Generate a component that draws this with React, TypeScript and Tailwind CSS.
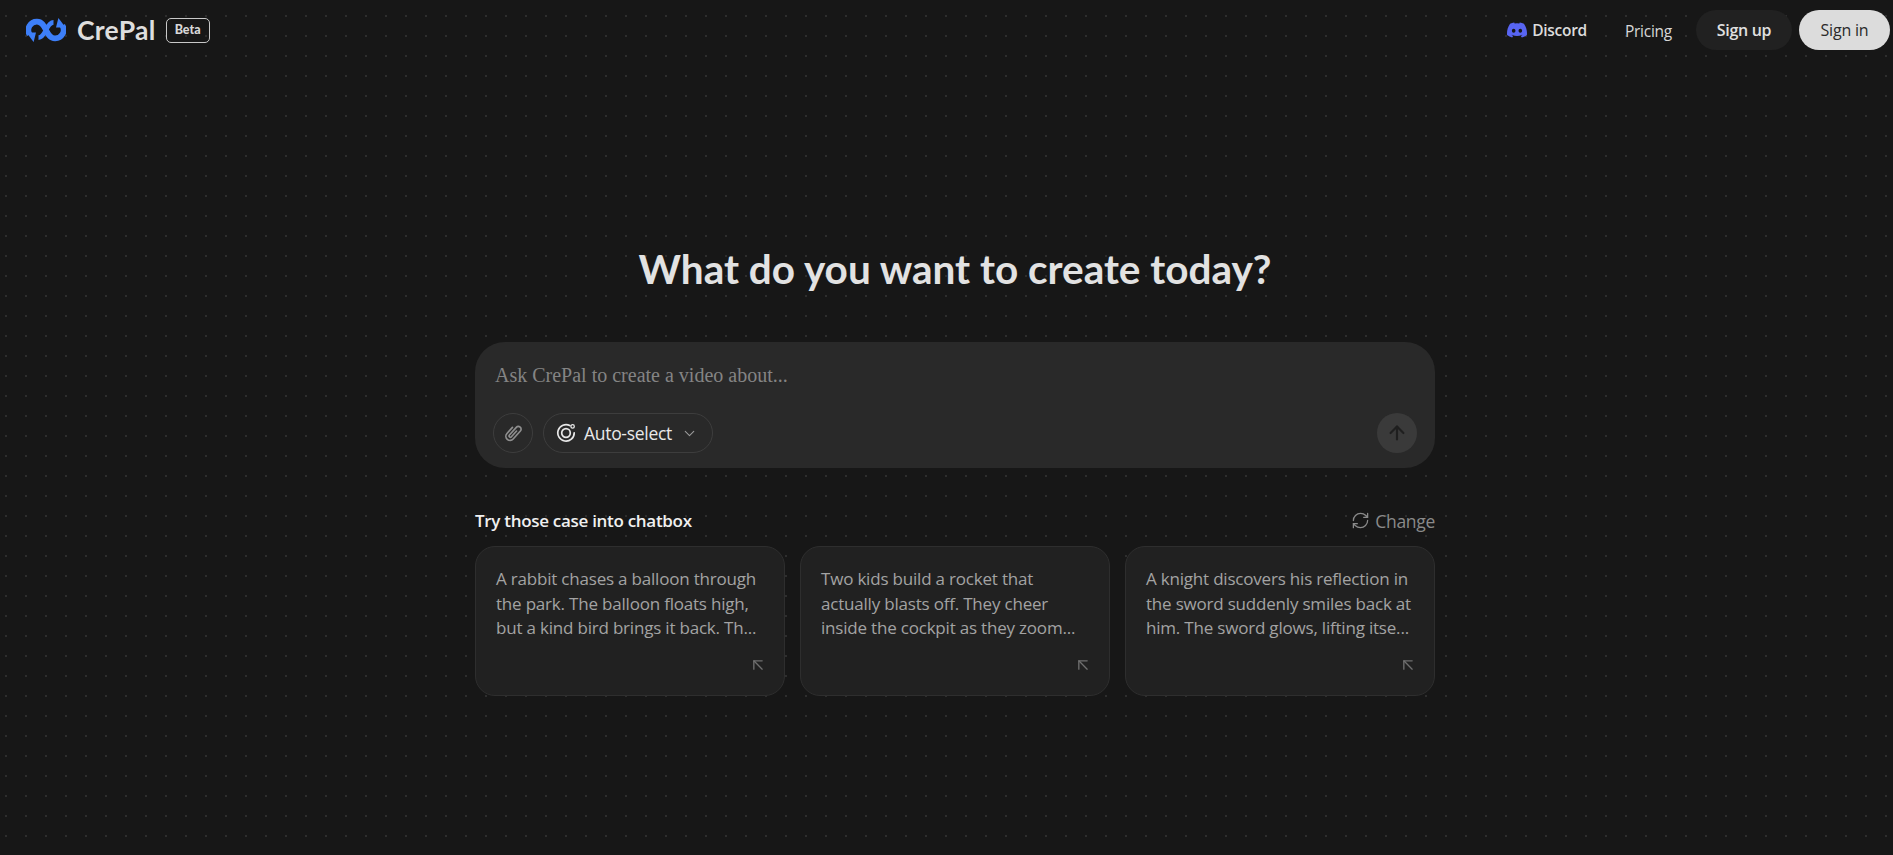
import React from "react";
import { ChevronDown, ArrowUp, RefreshCw, ArrowUpLeft } from "lucide-react";

const ui = "font-['Open_Sans','Noto_Sans',sans-serif]";

function Logo() {
  return (
    <svg width="40" height="26" viewBox="0 0 40 26" fill="none" stroke="#3d7ff8">
      <path d="M12.5 20.6 C16 20.6 18.2 16.6 20 13 C21.8 9.4 24 5.4 27.5 5.4" strokeWidth="4.6" />
      <path d="M3.6 17.5 A8.5 8.5 0 0 1 11 4.6 C16 4.6 18 9 20 13 C22 17 24 21.4 29 21.4 A8.5 8.5 0 0 0 36.4 8.5" strokeWidth="5.8" />
      <path d="M0.4 15.5 L7.6 25 L10 15.5 Z" fill="#3d7ff8" stroke="none" />
      <path d="M39.6 10.5 L32.4 1 L30 10.5 Z" fill="#3d7ff8" stroke="none" />
    </svg>
  );
}

function Discord() {
  return (
    <svg width="20" height="16" viewBox="0 0 127.14 96.36" fill="#5865f2">
      <path d="M107.7 8.07A105.15 105.15 0 0 0 81.47 0a72.06 72.06 0 0 0-3.36 6.83 97.68 97.68 0 0 0-29.11 0A72.37 72.37 0 0 0 45.64 0a105.89 105.89 0 0 0-26.25 8.09C2.79 32.65-1.71 56.6.54 80.21a105.73 105.73 0 0 0 32.17 16.15 77.7 77.7 0 0 0 6.89-11.11 68.42 68.42 0 0 1-10.85-5.18c.91-.66 1.8-1.34 2.66-2a75.57 75.57 0 0 0 64.32 0c.87.71 1.76 1.39 2.66 2a68.68 68.68 0 0 1-10.87 5.19 77 77 0 0 0 6.89 11.1 105.25 105.25 0 0 0 32.19-16.14c2.64-27.38-4.51-51.11-18.9-72.15ZM42.45 65.69C36.18 65.69 31 60 31 53s5-12.74 11.43-12.74S54 46 53.89 53s-5.05 12.69-11.44 12.69Zm42.24 0C78.41 65.69 73.25 60 73.25 53s5-12.74 11.44-12.74S96.23 46 96.12 53s-5.04 12.69-11.43 12.69Z" />
    </svg>
  );
}

function Clip() {
  return (
    <svg width="22" height="22" viewBox="0 0 20 20" fill="none" stroke="#8f8f8f" strokeWidth="1.5" strokeLinecap="round">
      <g transform="rotate(42 10 10)">
        <path d="M6.2 6.5 V14 a3.8 3.8 0 0 0 7.6 0 V4.2 a2.5 2.5 0 0 0 -5 0 V13.5 a1.2 1.2 0 0 0 2.4 0 V6.5" />
      </g>
    </svg>
  );
}

function TargetIcon() {
  return (
    <svg width="20" height="20" viewBox="0 0 20 20" fill="none" stroke="#e8e8e8" strokeWidth="1.7">
      <path d="M13.8 2.6A8.2 8.2 0 1 0 18.2 9.8" strokeLinecap="round" />
      <circle cx="10" cy="10" r="4.3" />
      <circle cx="16.6" cy="3.4" r="1.7" strokeWidth="1.3" />
    </svg>
  );
}

const cases = [
  ["A rabbit chases a balloon through", "the park. The balloon floats high,", "but a kind bird brings it back. Th..."],
  ["Two kids build a rocket that", "actually blasts off. They cheer", "inside the cockpit as they zoom..."],
  ["A knight discovers his reflection in", "the sword suddenly smiles back at", "him. The sword glows, lifting itse..."],
];

function CaseCard({ lines }: { lines: string[] }) {
  return (
    <div className="h-[150px] rounded-[20px] border border-[#2e2e2e] bg-[#212121] pl-[20px] pr-[20px] pt-[20px] flex flex-col">
      <div className="text-[17px] leading-[24.5px] text-[#a3a3a3] whitespace-nowrap tracking-[-0.2px]">
        {lines.map((l) => (
          <div key={l}>{l}</div>
        ))}
      </div>
      <div className="flex justify-end mt-[14px] mr-[-4px]">
        <ArrowUpLeft size={20} color="#6f6f6f" strokeWidth={1.6} />
      </div>
    </div>
  );
}

export default function App() {
  return (
    <div className={`${ui} h-[855px] overflow-hidden bg-[#171717] bg-[radial-gradient(circle_at_center,#2e2e2e_1px,transparent_1.3px)] bg-[size:20px_20px] bg-[position:-4px_6px] text-white`}>
      <header className="h-[60px] flex items-center justify-between pl-[26px] pr-[4px]">
        <div className="flex items-center">
          <Logo />
          <span className="ml-[11px] font-['Lato',sans-serif] font-bold text-[26.5px] leading-none tracking-[0.3px] text-[#dedede]">CrePal</span>
          <span className="ml-[10px] w-[44px] h-[25px] rounded-[5px] border border-[#c8c8c8] flex items-center justify-center font-['Lato',sans-serif] font-black text-[12.5px] text-[#d8d8d8]">Beta</span>
        </div>
        <nav className="flex items-center translate-x-[1px]">
          <Discord />
          <span className="ml-[5px] mt-[2px] text-[15.5px] font-semibold text-[#dcdcdc] tracking-[-0.3px]">Discord</span>
          <span className="ml-[38px] text-[15.5px] text-[#d8d8d8] tracking-[-0.25px] mt-[3px]">Pricing</span>
          <button className="ml-[24px] w-[96px] h-[40px] rounded-full bg-[#212121] text-[16px] font-semibold text-[#e0e0e0] tracking-[-0.3px]">Sign up</button>
          <button className="ml-[7px] w-[91px] h-[40px] rounded-full bg-[#dcdcdc] text-[16px] text-[#2a2a2a] tracking-[-0.2px]">Sign in</button>
        </nav>
      </header>

      <main className="flex flex-col items-center pl-[17px]">
        <h1 className="mt-[184px] h-[50px] leading-[50px] font-['Lato',sans-serif] font-bold text-[40.5px] text-[#e2e2e2] mb-0">What do you want to create today?</h1>

        <div className="w-[960px] mt-[48px]">
          <div className="h-[126px] rounded-[30px] bg-[#292929] pl-[20px] pr-[18px] pt-[21px] flex flex-col">
            <div className="font-['Liberation_Serif',serif] text-[20px] leading-[24px] text-[#848484]">Ask CrePal to create a video about...</div>
            <div className="mt-[26px] flex items-center justify-between ml-[-2px]">
              <div className="flex items-center gap-[10px]">
                <div className="w-[40px] h-[40px] rounded-full border border-[#3d3d3d] flex items-center justify-center">
                  <Clip />
                </div>
                <div className="h-[40px] w-[170px] rounded-full border border-[#3d3d3d] flex items-center pl-[12px]">
                  <TargetIcon />
                  <span className="ml-[8px] text-[17.5px] text-[#e8e8e8] tracking-[-0.3px]">Auto-select</span>
                  <ChevronDown size={17} color="#9a9a9a" className="ml-[9px]" strokeWidth={1.5} />
                </div>
              </div>
              <div className="w-[40px] h-[40px] rounded-full bg-[#3a3a3a] flex items-center justify-center">
                <ArrowUp size={22} color="#1f1f1f" strokeWidth={2.4} />
              </div>
            </div>
          </div>

          <div className="mt-[41px] flex items-center justify-between h-[24px]">
            <span className="text-[17px] font-semibold text-[#f0f0f0] tracking-[-0.3px]">Try those case into chatbox</span>
            <span className="flex items-center gap-[5px] text-[17.5px] leading-[22px] text-[#8a8a8a] tracking-[-0.3px] mt-[-1px]">
              <RefreshCw size={19} color="#8a8a8a" strokeWidth={1.6} />
              Change
            </span>
          </div>

          <div className="mt-[13px] grid grid-cols-3 gap-[15px]">
            {cases.map((c) => (
              <CaseCard key={c[0]} lines={c} />
            ))}
          </div>
        </div>
      </main>
    </div>
  );
}
